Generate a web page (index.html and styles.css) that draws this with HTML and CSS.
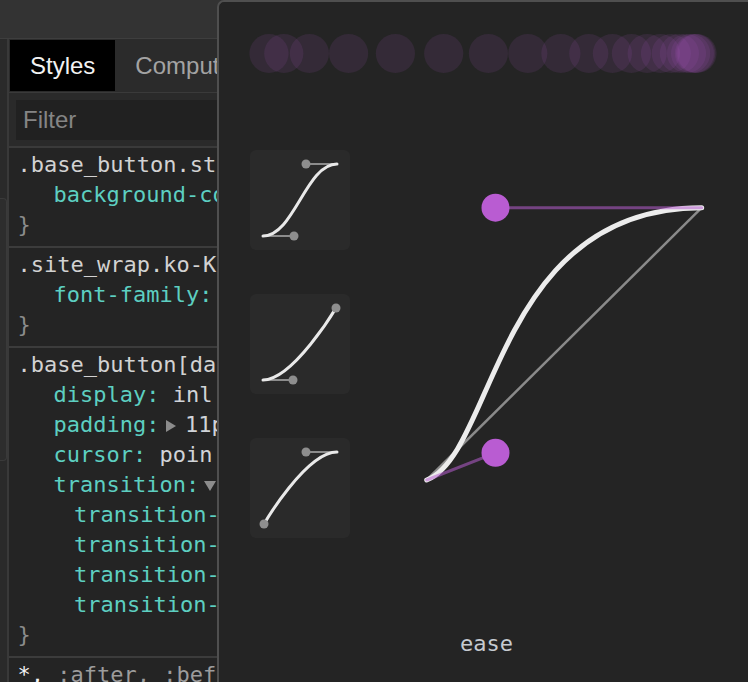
FILE: index.html
```html
<!DOCTYPE html>
<html>
<head>
<meta charset="utf-8">
<link rel="stylesheet" href="styles.css">
</head>
<body>
<div class="app">
  <div class="topbar"></div>
  <div class="main">
    <div class="gutter"><div class="gutter-block"></div></div>
    <div class="pane">
      <div class="tabs">
        <div class="tab active">Styles</div>
        <div class="tab">Comput</div>
      </div>
      <div class="filter-row"><div class="filter">Filter</div></div>
      <div class="rules">
        <div class="rule">
          <div class="line sel">.base_button.st</div>
          <div class="line decl"><span class="prop">background-co</span></div>
          <div class="line brace">}</div>
        </div>
        <div class="rule">
          <div class="line sel">.site_wrap.ko-K</div>
          <div class="line decl"><span class="prop">font-family</span><span class="colon">:</span></div>
          <div class="line brace">}</div>
        </div>
        <div class="rule">
          <div class="line sel">.base_button[da</div>
          <div class="line decl"><span class="prop">display</span><span class="colon">:</span> <span class="val">inl</span></div>
          <div class="line decl"><span class="prop">padding</span><span class="colon">:</span><span class="tri-r"></span><span class="val">11p</span></div>
          <div class="line decl"><span class="prop">cursor</span><span class="colon">:</span> <span class="val">poin</span></div>
          <div class="line decl"><span class="prop">transition</span><span class="colon">:</span><span class="tri-d"></span></div>
          <div class="line decl sub"><span class="prop">transition-</span></div>
          <div class="line decl sub"><span class="prop">transition-</span></div>
          <div class="line decl sub"><span class="prop">transition-</span></div>
          <div class="line decl sub"><span class="prop">transition-</span></div>
          <div class="line brace">}</div>
        </div>
        <div class="rule">
          <div class="line sel"><span class="sel-match">*,</span><span class="sel-dim"> :after, :bef</span></div>
        </div>
      </div>
    </div>
  </div>

  <div class="popover">
    <svg class="trail" width="529" height="100" viewBox="0 0 529 100">
      <circle cx="50" cy="51.5" r="19.6"/>
      <circle cx="64.8" cy="51.5" r="19.6"/>
      <circle cx="90.4" cy="51.5" r="19.6"/>
      <circle cx="129.6" cy="51.5" r="19.6"/>
      <circle cx="176.4" cy="51.5" r="19.6"/>
      <circle cx="224.7" cy="51.5" r="19.6"/>
      <circle cx="269.4" cy="51.5" r="19.6"/>
      <circle cx="308.8" cy="51.5" r="19.6"/>
      <circle cx="341.9" cy="51.5" r="19.6"/>
      <circle cx="369.8" cy="51.5" r="19.6"/>
      <circle cx="393.4" cy="51.5" r="19.6"/>
      <circle cx="412.4" cy="51.5" r="19.6"/>
      <circle cx="428.2" cy="51.5" r="19.6"/>
      <circle cx="441.5" cy="51.5" r="19.6"/>
      <circle cx="452.3" cy="51.5" r="19.6"/>
      <circle cx="460.4" cy="51.5" r="19.6"/>
      <circle cx="467.5" cy="51.5" r="19.6"/>
      <circle cx="471.6" cy="51.5" r="19.6"/>
      <circle cx="475.4" cy="51.5" r="19.6"/>
      <circle cx="476.7" cy="51.5" r="19.6"/>
      <circle cx="478" cy="51.5" r="19.6"/>
    </svg>

    <div class="editor">
      <div class="presets">
        <div class="preset">
          <svg width="100" height="100" viewBox="0 0 100 100">
            <line class="pl" x1="13" y1="86" x2="44" y2="86"/>
            <line class="pl" x1="56" y1="14" x2="87" y2="14"/>
            <path class="pc" d="M13 86 C44 86 56 14 87 14"/>
            <circle class="pd" cx="44" cy="86" r="4.5"/>
            <circle class="pd" cx="56" cy="14" r="4.5"/>
          </svg>
        </div>
        <div class="preset">
          <svg width="100" height="100" viewBox="0 0 100 100">
            <line class="pl" x1="13" y1="86" x2="43" y2="86"/>
            <path class="pc" d="M13 86 C43 86 86 14 86 14"/>
            <circle class="pd" cx="43" cy="86" r="4.5"/>
            <circle class="pd" cx="86" cy="14" r="4.5"/>
          </svg>
        </div>
        <div class="preset">
          <svg width="100" height="100" viewBox="0 0 100 100">
            <line class="pl" x1="56" y1="14" x2="87" y2="14"/>
            <path class="pc" d="M14 86 C14 86 56 14 87 14"/>
            <circle class="pd" cx="14" cy="86" r="4.5"/>
            <circle class="pd" cx="56" cy="14" r="4.5"/>
          </svg>
        </div>
      </div>
      <svg class="curve" width="320" height="400" viewBox="0 0 320 400">
        <line class="diag" x1="26.7" y1="330" x2="301.7" y2="57.7"/>
        <path class="main-curve" d="M26.7 330 C95.5 302.8 95.5 57.7 301.7 57.7"/>
        <line class="hl" x1="26.7" y1="330" x2="95.5" y2="302.8"/>
        <line class="hl" x1="95.5" y1="57.7" x2="301.7" y2="57.7"/>
        <circle class="hd" cx="95.5" cy="302.8" r="14"/>
        <circle class="hd" cx="95.5" cy="57.7" r="14"/>
      </svg>
    </div>

    <div class="label">ease</div>
  </div>
</div>
</body>
</html>
```

FILE: styles.css
```css
* { box-sizing: border-box; }
html, body { margin: 0; padding: 0; }
body {
  width: 748px;
  height: 682px;
  overflow: hidden;
  background: #242424;
  font-family: "Liberation Sans", Arial, sans-serif;
}
.app {
  position: relative;
  width: 748px;
  height: 682px;
  overflow: hidden;
}
.topbar {
  height: 39px;
  background: #333333;
  border-bottom: 1px solid #3e3e3e;
}
.main {
  display: flex;
  height: 643px;
}
.gutter {
  width: 7px;
  background: #2a2a2a;
  padding-top: 159px;
}
.gutter-block {
  height: 263px;
  background: #2d2d2d;
  border: 1px solid #3a3a3a;
  border-left: none;
  border-radius: 0 4px 4px 0;
}
.pane {
  width: 210px;
  border-left: 2px solid #393939;
  overflow: hidden;
  background: #242424;
}
.tabs {
  display: flex;
  height: 54px;
  padding: 1px 0 1px 1px;
  background: #2b2b2b;
  border-bottom: 1px solid #3a3a3a;
}
.tab {
  height: 51px;
  padding: 0 20px;
  font-size: 24px;
  line-height: 51px;
  color: #a3a3a3;
  white-space: nowrap;
}
.tab.active {
  background: #000000;
  color: #f2f2f2;
}
.filter-row {
  height: 55px;
  padding: 7px 0 6px 7px;
  background: #2a2a2a;
  border-bottom: 2px solid #3a3a3a;
}
.filter {
  width: 300px;
  height: 40px;
  padding-left: 7px;
  background: #212121;
  color: #858585;
  font-size: 24px;
  line-height: 40px;
}
.rule {
  padding: 2px 0 6px;
  border-bottom: 2px solid #3c3c3c;
  font-family: "DejaVu Sans Mono", monospace;
  font-size: 22px;
  line-height: 30px;
}
.line {
  height: 30px;
  white-space: pre;
  overflow: hidden;
}
.sel {
  padding-left: 8.5px;
  color: #d2d2d2;
}
.sel-match { color: #f4f4f4; }
.sel-dim { color: #9c9c9c; }
.decl {
  padding-left: 44.5px;
  color: #d0d3d8;
}
.decl.sub { padding-left: 65px; }
.prop { color: #5dcfc1; }
.colon { color: #5dcfc1; }
.val { color: #d0d3d8; }
.brace {
  padding-left: 8.5px;
  color: #8c8c8c;
}
.tri-r {
  display: inline-block;
  width: 0;
  height: 0;
  margin: 0 9px 0 6.5px;
  border-left: 10px solid #8c8c8c;
  border-top: 6px solid transparent;
  border-bottom: 6px solid transparent;
  vertical-align: middle;
}
.tri-d {
  display: inline-block;
  width: 0;
  height: 0;
  margin: 0 0 0 5px;
  border-top: 10px solid #8c8c8c;
  border-left: 6.5px solid transparent;
  border-right: 6.5px solid transparent;
  vertical-align: middle;
}

.popover {
  position: absolute;
  left: 217px;
  top: 0;
  width: 531px;
  height: 682px;
  display: flex;
  flex-direction: column;
  background: #242424;
  border-top: 2px solid #4f4f4f;
  border-left: 2px solid #4f4f4f;
  border-top-left-radius: 7px;
}
.trail {
  display: block;
  flex: none;
}
.trail circle { fill: rgba(182, 93, 208, 0.11); }
.editor {
  display: flex;
  align-items: flex-start;
  margin-top: 48px;
  padding-left: 31px;
}
.presets {
  display: flex;
  flex-direction: column;
  gap: 44px;
}
.preset {
  width: 100px;
  height: 100px;
  background: #2a2a2a;
  border-radius: 6px;
}
.preset svg { display: block; }
.pl { stroke: #8c8c8c; stroke-width: 2; }
.pc { fill: none; stroke: #e9e9e9; stroke-width: 3; stroke-linecap: round; }
.pd { fill: #8e8e8e; }
.curve {
  display: block;
  margin-left: 50px;
}
.diag { stroke: #8a8a8a; stroke-width: 2.5; }
.main-curve { fill: none; stroke: #ececec; stroke-width: 5; stroke-linecap: round; }
.hl { stroke: #b65dd0; stroke-opacity: 0.55; stroke-width: 3; stroke-linecap: round; }
.hd { fill: #b95cd2; }
.label {
  margin-top: 79px;
  padding-left: 241px;
  font-family: "DejaVu Sans Mono", monospace;
  font-size: 22px;
  line-height: 30px;
  color: #c6cbd1;
}
```
